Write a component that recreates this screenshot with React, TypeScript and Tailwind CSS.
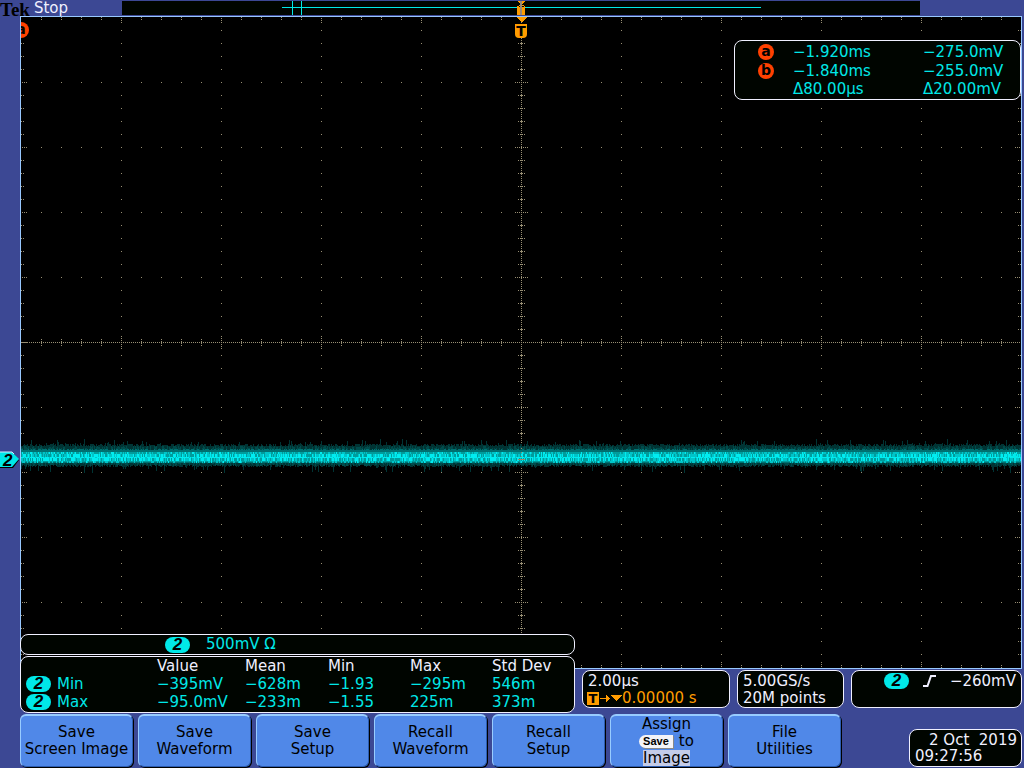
import React from "react";

const DIV_X = 100;
const DIV_Y = 65;
const WIDTH = 1000;
const HEIGHT = 651;

const dot = (x: number, y: number) => `M${x} ${y}h1v1h-1z`;

const buildGraticule = () => {
  let d = "";
  for (let x = 20; x < WIDTH; x += 20) {
    const major = x % DIV_X === 0;
    for (let y = DIV_Y; y < 650; y += DIV_Y) d += dot(x, y);
    (major ? [1, 3, 5] : [0, 2]).forEach((o) => {
      d += dot(x, o) + dot(x, 650 - o);
    });
    (major ? [-6, -4, -2, 2, 4, 6] : [-3, -1, 1, 3]).forEach((o) => {
      d += dot(x, 325 + o);
    });
  }
  for (let y = 13; y < 650; y += 13) {
    const major = y % DIV_Y === 0;
    for (let x = DIV_X; x < WIDTH; x += DIV_X) d += dot(x, y);
    (major ? [1, 3, 5] : [0, 2]).forEach((o) => {
      d += dot(o, y) + dot(999 - o, y);
    });
    (major ? [-6, -4, -2, 2, 4, 6] : [-3, -1, 1, 3]).forEach((o) => {
      d += dot(500 + o, y);
    });
  }
  for (let x = 0; x < WIDTH; x += 2) d += dot(x, 325);
  for (let y = 1; y < HEIGHT; y += 2) d += dot(500, y);
  return d;
};

// Fixed seed keeps the noise band the same on every render
const createRandom = (seed: number) => () => {
  seed = (seed * 1664525 + 1013904223) % 4294967296;
  return seed / 4294967296;
};

const TRACE_ROWS = [
  { y: 435, h: 2, bright: 0.1 },
  { y: 437, h: 3, bright: 0.4 },
  { y: 440, h: 1, bright: 0.85 },
  { y: 441, h: 3, bright: 0.35 },
  { y: 444, h: 2, bright: 0.05 },
];

const buildTrace = () => {
  const random = createRandom(7);
  const layers = { faint: "", dim: "", mid: "", base: "", strong: "", peak: "" };
  for (let x = 0; x < WIDTH; x++) {
    const spike = random() > 0.88 ? Math.floor(random() * 6) : 0;
    const dip = random() > 0.9 ? Math.floor(random() * 7) : 0;
    const top = 427 + Math.floor(random() * 3) - spike;
    const bottom = 448 + Math.floor(random() * 3) + dip;
    layers.faint += `M${x} ${top}h1V${bottom}h-1z`;
    if (random() > 0.4) layers.dim += `M${x} ${429 + Math.floor(random() * 3)}h1V${447 + Math.floor(random() * 3)}h-1z`;
    layers.mid += `M${x} ${432 + Math.floor(random() * 2)}h1V446h-1z`;
    layers.base += `M${x} 435h1V445h-1z`;
    TRACE_ROWS.forEach((row) => {
      const r = random();
      const cell = `M${x} ${row.y}h1v${row.h}h-1z`;
      if (r < row.bright) layers.peak += cell;
      else if (r < row.bright + 0.35) layers.strong += cell;
    });
  }
  return layers;
};

const graticule = buildGraticule();
const trace = buildTrace();

const ChannelBadge = () => (
  <span className="inline-flex h-4 w-[25px] shrink-0 items-center justify-center rounded-full bg-[#00e8e8] font-['Liberation_Sans',sans-serif] text-[17px] leading-4 font-bold italic text-black">
    2
  </span>
);

const CursorBadge = ({ name }: { name: string }) => (
  <span className="flex size-4 items-center justify-center rounded-full bg-[#ff4000] text-sm leading-4 font-bold text-black">
    <span className="-mt-0.5">{name}</span>
  </span>
);

const Header = () => (
  <header className="flex h-4 items-center">
    <div className="flex w-[122px] items-center gap-1 leading-4">
      <span className="pt-1 font-['Liberation_Serif',serif] text-[19px] leading-4 font-bold text-black">Tek</span>
      <span className="text-[#f0f0ff]">Stop</span>
    </div>
    <svg className="h-[14px] flex-1 bg-[#000500]" viewBox="0 0 798 14" preserveAspectRatio="none" shapeRendering="crispEdges" aria-hidden="true">
      <path d="M160 6h479v1H160zM170 0h1v14h-1zM179 0h1v14h-1z" fill="#00e8e8" />
      <path d="M396 0h7v1h-1v1h-1v1h-3V2h-1V1h-1zM397 4h5v1h1v9h-8V5h2z" fill="#ff9c00" />
      <path d="M397 5h5v1h-5z" fill="#000500" />
      <path d="M398 0h2v14h-2z" fill="#988878" />
    </svg>
    <div className="w-[104px]" />
  </header>
);

const CursorReadout = () => (
  <div className="absolute top-[23px] right-0 w-[287px] rounded-lg border border-[#f0f0ff] bg-[#000500] text-[#00e8e8]">
    <table className="w-full table-fixed text-left">
      <colgroup>
        <col className="w-[58px]" />
        <col className="w-[130px]" />
        <col />
      </colgroup>
      <tbody>
        <tr className="h-[19px]">
          <td className="pt-[3px] pl-[23px] leading-4"><CursorBadge name="a" /></td>
          <td className="pt-[3px] leading-4">−1.920ms</td>
          <td className="pt-[3px] leading-4">−275.0mV</td>
        </tr>
        <tr className="h-[19px]">
          <td className="pt-[3px] pl-[23px] leading-4"><CursorBadge name="b" /></td>
          <td className="pt-[3px] leading-4">−1.840ms</td>
          <td className="pt-[3px] leading-4">−255.0mV</td>
        </tr>
        <tr className="h-5">
          <td />
          <td className="leading-4">Δ80.00µs</td>
          <td className="leading-4">Δ20.00mV</td>
        </tr>
      </tbody>
    </table>
  </div>
);

const Display = () => (
  <main className="relative mr-0.5 ml-5 flex-1 border border-[#98c8ff] bg-black">
    <div className="absolute inset-0 overflow-hidden">
      <svg className="size-full" viewBox={`0 0 ${WIDTH} ${HEIGHT}`} preserveAspectRatio="none" shapeRendering="crispEdges" role="img" aria-label="Channel 2 waveform">
        <path d={graticule} fill="#988f74" />
        <path d={trace.faint} fill="#003434" />
        <path d={trace.dim} fill="#004c4c" />
        <path d={trace.mid} fill="#007070" />
        <path d={trace.base} fill="#009c9c" />
        <path d={trace.strong} fill="#00c4c8" />
        <path d={trace.peak} fill="#00ecf0" />
        <path d="M993 436h2v8h-2zM990 439h7v2h-7z" fill="#00e8e8" />
        <path d="M500 431h1v1h-1zM500 435h1v1h-1zM500 439h1v1h-1zM497 442h7v1h-7z" fill="#a08868" />
      </svg>
      <div className="absolute top-[5px] -left-2">
        <CursorBadge name="a" />
      </div>
      <div className="absolute top-0 left-1/2 flex w-3 -translate-x-1/2 flex-col items-center gap-0.5">
        <svg className="h-[5px] w-[11px]" viewBox="0 0 11 5" shapeRendering="crispEdges" aria-hidden="true">
          <path d="M0 0h11L6 5H5z" fill="#ff9c00" />
        </svg>
        <span className="flex h-[14px] w-3 items-center justify-center rounded-b bg-[#ff9c00] text-sm leading-[14px] font-bold text-black">T</span>
      </div>
      <CursorReadout />
    </div>
    <div className="absolute top-[68%] -left-[21px] -mt-[9px] h-[18px] w-5">
      <svg className="size-full" viewBox="0 0 20 18" aria-label="Channel 2 level">
        <path d="M0 2h13l6 7-6 8H0z" fill="#000" />
        <path d="M0 1h12l7 7-7 8H0z" fill="#00e8e8" />
        <path d="M0 1h12l2 2" fill="none" stroke="#d0ecff" />
        <text x="3" y="15" fontFamily="Liberation Sans, sans-serif" fontSize="17" fontWeight="bold" fontStyle="italic">2</text>
      </svg>
    </div>
  </main>
);

const measurements = [
  { name: "Min", value: "−395mV", mean: "−628m", min: "−1.93", max: "−295m", dev: "546m" },
  { name: "Max", value: "−95.0mV", mean: "−233m", min: "−1.55", max: "225m", dev: "373m" },
];

const Measurements = () => (
  <div className="rounded-lg border border-[#f0f0ff] bg-[#000500] pb-px text-[#00e8e8]">
    <table className="w-full table-fixed text-left leading-[18px]">
      <colgroup>
        <col className="w-[136px]" />
        <col className="w-[88px]" />
        <col className="w-[83px]" />
        <col className="w-[82px]" />
        <col className="w-[82px]" />
        <col />
      </colgroup>
      <thead className="text-[#f0f0ff]">
        <tr>
          <td />
          <th className="font-normal">Value</th>
          <th className="font-normal">Mean</th>
          <th className="font-normal">Min</th>
          <th className="font-normal">Max</th>
          <th className="font-normal">Std Dev</th>
        </tr>
      </thead>
      <tbody>
        {measurements.map((m) => (
          <tr key={m.name} className="h-[18px]">
            <th className="font-normal">
              <span className="flex items-center gap-1.5 pl-[5px]">
                <ChannelBadge />
                {m.name}
              </span>
            </th>
            <td>{m.value}</td>
            <td>{m.mean}</td>
            <td>{m.min}</td>
            <td>{m.max}</td>
            <td>{m.dev}</td>
          </tr>
        ))}
      </tbody>
    </table>
  </div>
);

const StatusRow = () => (
  <section className="relative -mt-[35px] mr-0.5 ml-5 flex items-start gap-[7px] whitespace-nowrap text-[#f0f0ff]">
    <div className="flex w-[555px] flex-col gap-px">
      <div className="flex h-[21px] items-center gap-4 rounded-lg border border-[#f0f0ff] bg-[#000500] pl-36 text-[#00e8e8]">
        <ChannelBadge />
        <span>500mV Ω</span>
      </div>
      <Measurements />
    </div>
    <div className="mt-9 h-[38px] w-[148px] rounded-lg border border-[#f0f0ff] bg-[#000500] pt-0.5 pl-1 leading-[17px]">
      <div className="pl-px">2.00µs</div>
      <div className="flex items-center text-[#ff9c00]">
        <span className="flex h-[13px] w-3 items-center justify-center bg-[#ff9c00] text-[13px] leading-[13px] font-bold text-black">T</span>
        <svg className="h-[9px] w-[23px]" viewBox="0 0 23 9" fill="currentColor" shapeRendering="crispEdges" aria-hidden="true">
          <path d="M1 4h6V1h1v1h1v1h1v1h1v1h-1v1H9v1H8v1H7V5H1zM11 1h12l-6 6z" />
        </svg>
        <span>0.00000 s</span>
      </div>
    </div>
    <div className="mt-9 h-[38px] w-[107px] rounded-lg border border-[#f0f0ff] bg-[#000500] pt-0.5 pl-[5px] leading-[17px]">
      <div>5.00GS/s</div>
      <div>20M points</div>
    </div>
    <div className="mt-9 flex h-[38px] flex-1 items-start justify-end gap-[14px] rounded-lg border border-[#f0f0ff] bg-[#000500] pt-0.5 pr-[5px] leading-[17px]">
      <ChannelBadge />
      <svg className="mt-0.5 h-3 w-[13px]" viewBox="0 0 13 12" fill="none" stroke="currentColor" strokeWidth="2" aria-label="Rising edge">
        <path d="M0 11h4.500L8 1h5" />
      </svg>
      <span>−260mV</span>
    </div>
  </section>
);

const SoftKey = ({ children }: { children: React.ReactNode }) => (
  <button
    type="button"
    className="flex h-[53px] w-[113px] flex-col items-center justify-center rounded-md border border-t-2 border-t-[#98ccff] border-r-[#2c5cb0] border-b-[#2c5cb0] border-l-[#98ccff] bg-[#5088e8] leading-[17px] whitespace-nowrap text-black shadow-[1px_1px_0_#000]"
  >
    {children}
  </button>
);

const softKeys = [
  ["Save", "Screen Image"],
  ["Save", "Waveform"],
  ["Save", "Setup"],
  ["Recall", "Waveform"],
  ["Recall", "Setup"],
];

const SoftKeys = () => (
  <footer className="mt-px mr-0.5 ml-5 flex items-start pb-px">
    <nav className="flex gap-[5px]">
      {softKeys.map(([action, target]) => (
        <SoftKey key={action + target}>
          <span>{action}</span>
          <span>{target}</span>
        </SoftKey>
      ))}
      <SoftKey>
        <span>Assign</span>
        <span className="flex items-center gap-1.5">
          <span className="rounded-l-full rounded-r-sm bg-[#f4f4f8] px-1 font-['Liberation_Sans',sans-serif] text-[11px] leading-[13px] font-bold shadow-[1px_1px_0_#888]">
            Save
          </span>
          to
        </span>
        <span className="bg-[#c4cce8] leading-4">Image</span>
      </SoftKey>
      <SoftKey>
        <span>File</span>
        <span>Utilities</span>
      </SoftKey>
    </nav>
    <div className="mt-[15px] ml-auto w-[113px] rounded-lg border border-[#f0f0ff] bg-[#000500] py-0.5 pr-1 pl-[5px] leading-4 text-[#f0f0ff]">
      <div className="text-right whitespace-pre">2 Oct  2019</div>
      <div>09:27:56</div>
    </div>
  </footer>
);

const App = () => (
  <div className="flex min-h-screen flex-col bg-[#3c4894] font-['DejaVu_Sans',sans-serif] text-[15px]">
    <Header />
    <Display />
    <StatusRow />
    <SoftKeys />
  </div>
);

export default App;
